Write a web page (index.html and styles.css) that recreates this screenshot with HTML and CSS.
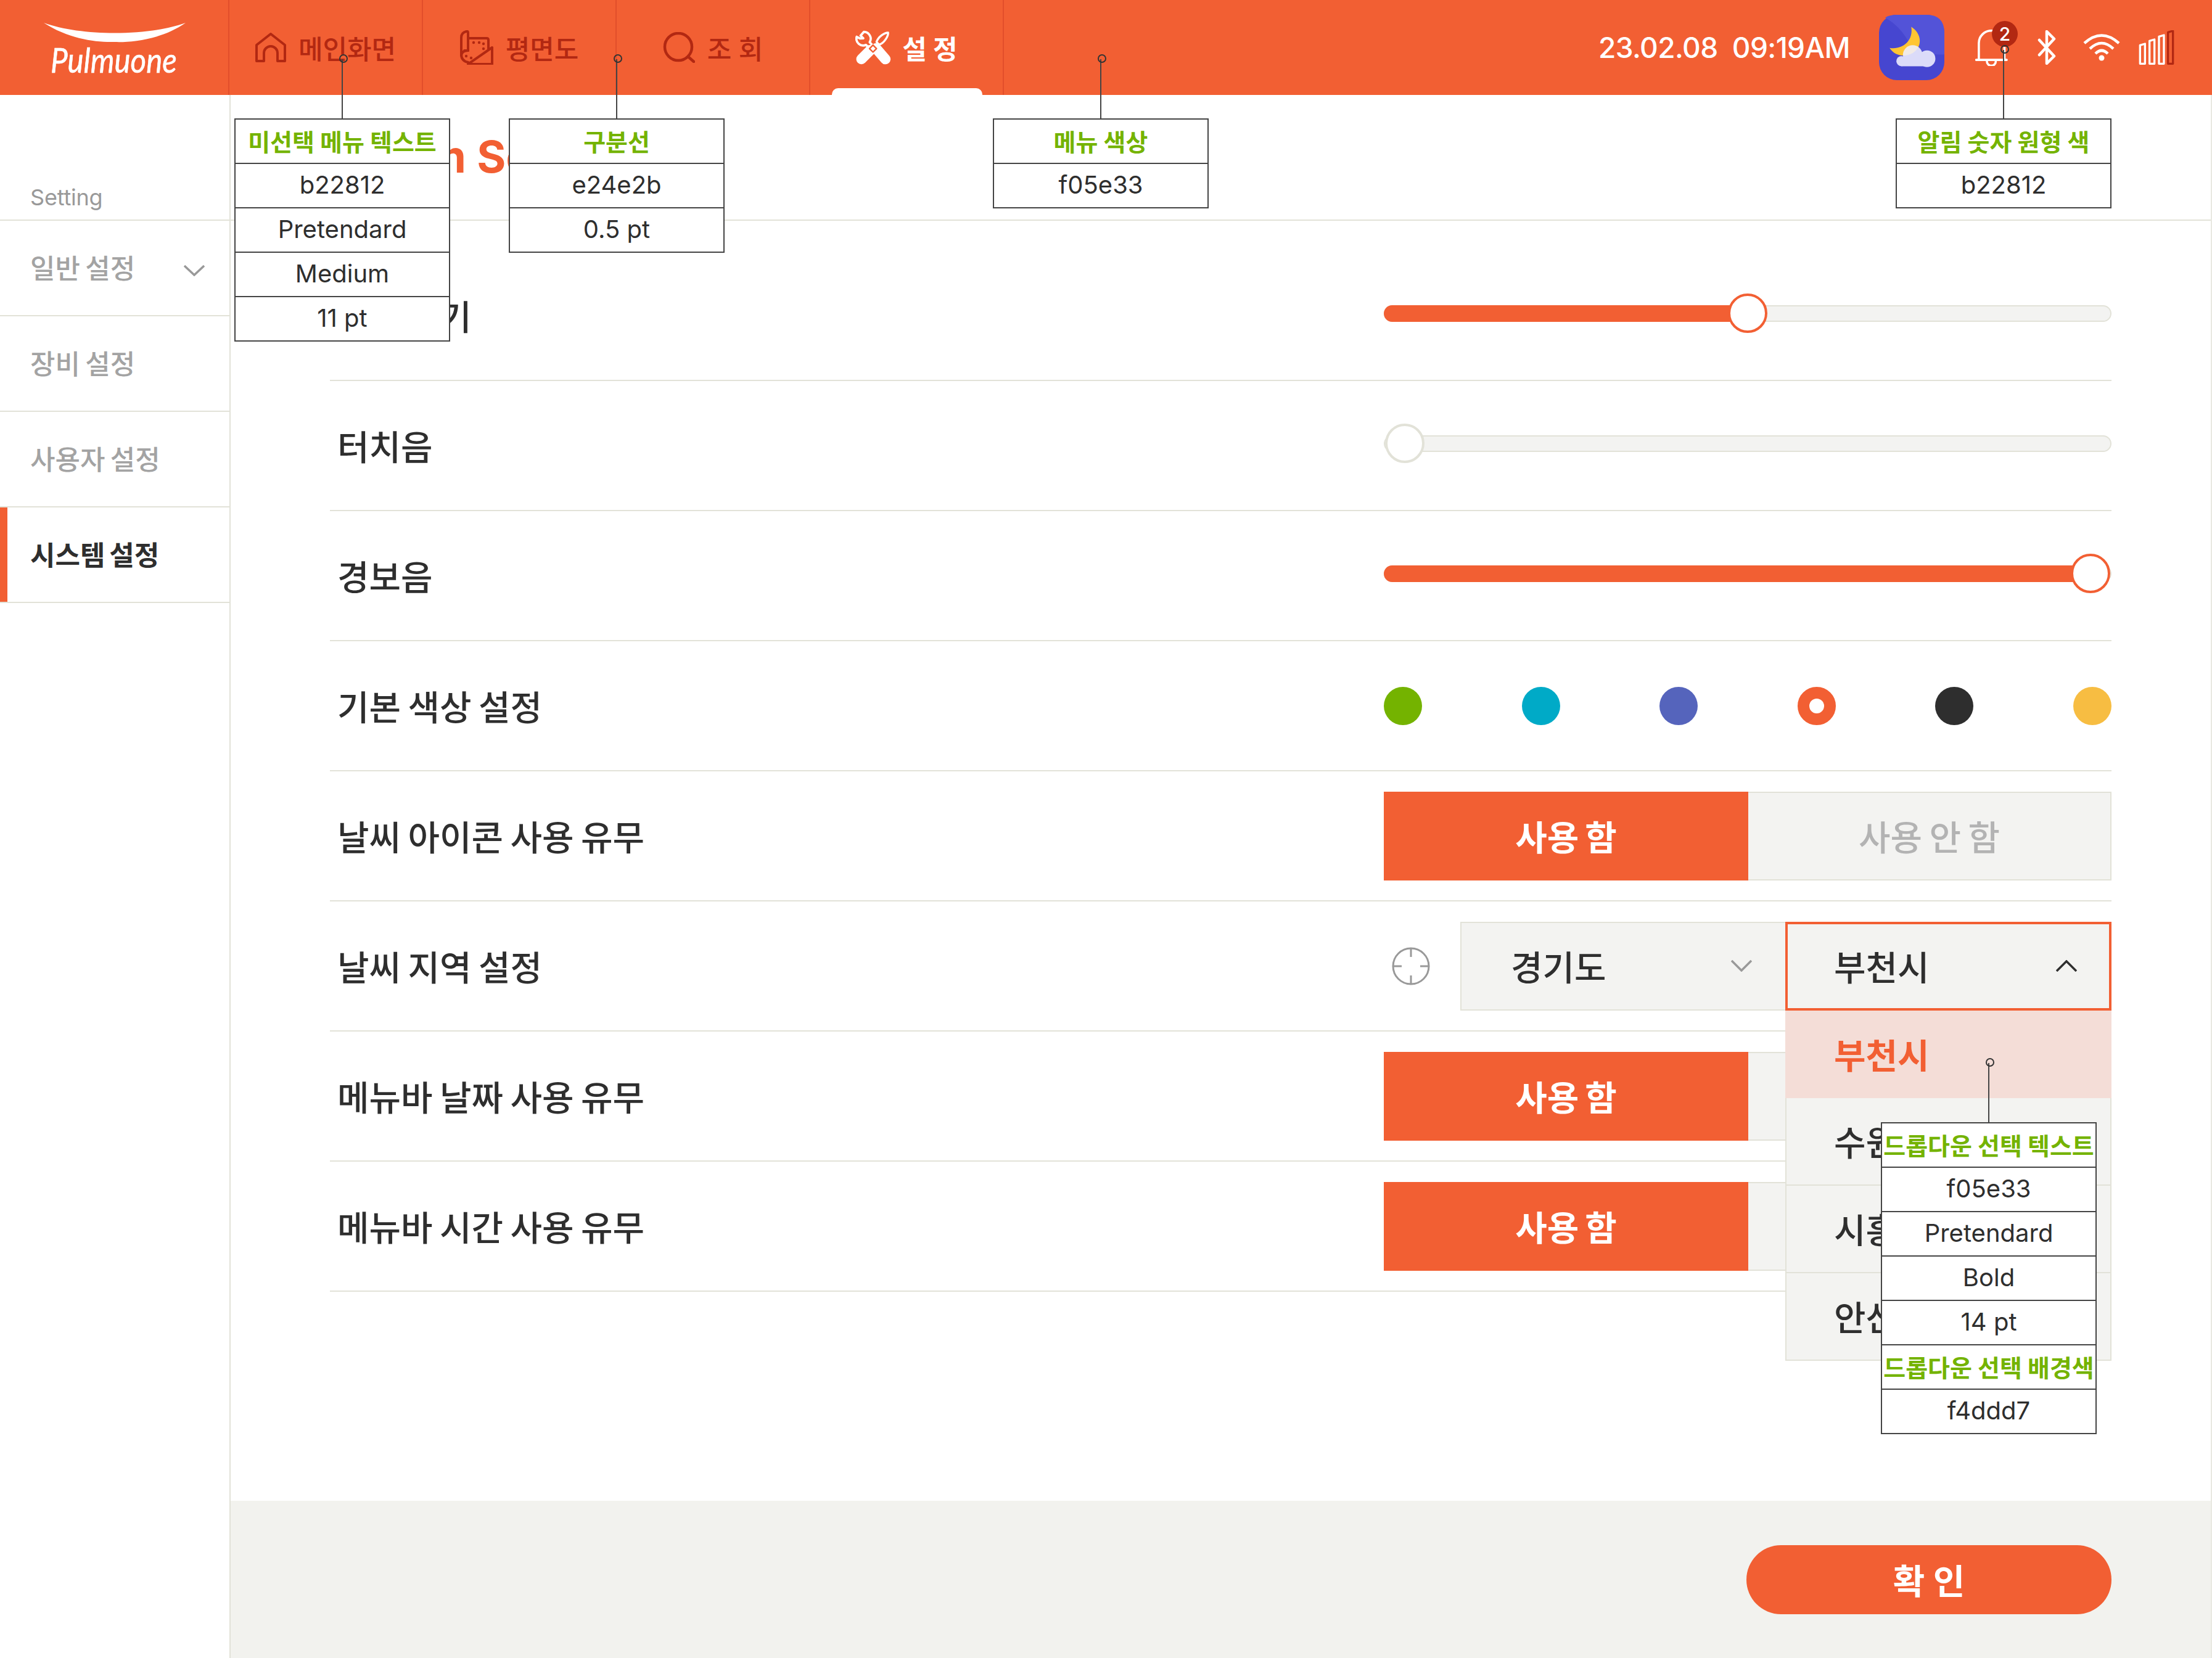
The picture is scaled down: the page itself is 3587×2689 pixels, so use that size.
FILE: index.html
```html
<!DOCTYPE html>
<html lang="ko">
<head>
<meta charset="utf-8">
<title>Pulmuone Setting</title>
<link rel="stylesheet" href="styles.css">
</head>
<body>
<div class="app">
  <header class="topbar">
    <div class="logo">
      <svg class="logo-smile" viewBox="0 0 230 32"><path d="M0 0C60 22 170 22 230 0C190 28 140 32 115 31C85 32 40 26 0 0Z" fill="#fff"/></svg>
      <span class="logo-text">Pulmuone</span>
    </div>
    <nav class="nav">
      <a class="nav-item">
        <svg class="ico-home" viewBox="0 0 50 48" fill="none" stroke="#b22812" stroke-width="4" stroke-linejoin="round"><path d="M2 20L25 2L48 20V46H36V33A11 11 0 0 0 14 33V46H2Z"/></svg>
        <span>메인화면</span>
      </a>
      <a class="nav-item">
        <svg class="ico-plan" viewBox="0 0 54 56" fill="none" stroke="#b22812" stroke-width="4" stroke-linejoin="round" stroke-linecap="round"><path d="M13 13H43Q46 13 46 16V30M13 33V4Q13 1 10 2Q2 4 2 12V39Q2 50 13 52"/><path d="M13 33Q3 33 2 41"/><path d="M52 28V55H13ZM13 33L7 33"/><g fill="#b22812" stroke="none"><circle cx="22" cy="20" r="2.2"/><circle cx="31" cy="20" r="2.2"/><circle cx="38" cy="22" r="2.2"/><circle cx="38" cy="30" r="2.2"/><circle cx="10" cy="42" r="2.2"/><circle cx="18" cy="45" r="2.2"/></g></svg>
        <span>평면도</span>
      </a>
      <a class="nav-item">
        <svg class="ico-search" viewBox="0 0 52 50" fill="none" stroke="#b22812" stroke-width="4.5" stroke-linecap="round"><circle cx="25" cy="24" r="22"/><path d="M41 40L50 48"/></svg>
        <span>조 회</span>
      </a>
      <a class="nav-item nav-active">
        <svg class="ico-tools" viewBox="55 88 172 170" fill="none" stroke="#fff" stroke-linecap="round" stroke-linejoin="round">
          <path d="M84 228L128 184M200 228L155 176" stroke-width="50"/>
          <path d="M96 96A33 33 0 0 1 124 146L148 172M95 97L80 114L93 127M61 120A33 33 0 0 0 106 159L128 180M61 120L77 128L93 127" stroke-width="11"/>
          <path d="M213 100C215 115 195 150 170 158L157 145C165 120 195 100 213 100Z" stroke-width="10"/>
          <path d="M140 160L157 177L140 194L123 177Z" fill="#fff" stroke="#f25f33" stroke-width="7"/>
        </svg>
        <span>설 정</span>
        <i class="nav-marker"></i>
      </a>
    </nav>
    <div class="status">
      <span class="clock">23.02.08&nbsp; 09:19AM</span>
      <svg class="weather" viewBox="80 38 320 320">
        <rect x="80" y="38" width="320" height="320" rx="88" fill="#4646d0"/>
        <path d="M110 52Q130 38 168 38H312Q400 38 400 126V232Q290 240 225 170Q180 90 110 52Z" fill="#5353d8"/>
        <path d="M238 97C290 130 295 195 245 225C205 248 155 238 132 200C190 210 250 170 238 97Z" fill="#ffc533"/>
        <g opacity=".88" fill="#f0f0ff"><circle cx="245" cy="235" r="48"/><circle cx="315" cy="253" r="41"/><circle cx="190" cy="265" r="25"/><rect x="190" y="250" width="125" height="40"/></g>
      </svg>
      <div class="bell">
        <svg class="bell-svg" viewBox="100 115 165 180" fill="none" stroke="#fff" stroke-width="11" stroke-linecap="round"><path d="M118 262V182A62 62 0 0 1 180 120H190M245 180V262M105 265H256M158 272A22 22 0 0 0 202 272"/></svg>
        <span class="bell-badge">2</span>
      </div>
      <svg class="ico-bt" viewBox="0 0 30 56" fill="none" stroke="#fff" stroke-width="4.5" stroke-linejoin="round" stroke-linecap="round"><path d="M3 16L27 42L15 54V2L27 14L3 40"/></svg>
      <svg class="ico-wifi" viewBox="0 0 60 44" fill="none" stroke="#fff" stroke-width="4.5" stroke-linecap="butt"><path d="M2 15Q30 -10 58 15M11 24Q30 6 49 24M20 32Q30 22 40 32"/><circle cx="30" cy="39" r="4.5" fill="#fff" stroke="none"/></svg>
      <svg class="ico-signal" viewBox="475 117 172 168" fill="none" stroke="#fff" stroke-width="10" stroke-linejoin="round"><path d="M481 190L505 183V280H481ZM527 169L551 162V280H527ZM573 148L597 141V280H573Z"/><path d="M617 127L641 120V280H617Z" stroke="#b22812"/></svg>
    </div>
  </header>

  <div class="body">
    <aside class="sidebar">
      <div class="side-head">Setting</div>
      <div class="side-item">일반 설정
        <svg class="chev" viewBox="0 0 34 18" fill="none" stroke="#999" stroke-width="3.5"><path d="M1 1L17 16L33 1"/></svg>
      </div>
      <div class="side-item">장비 설정</div>
      <div class="side-item">사용자 설정</div>
      <div class="side-item side-active">시스템 설정</div>
    </aside>

    <main class="main">
      <h1 class="title">System Setting</h1>
      <section class="rows">
        <div class="row">
          <div class="label">화면 밝기</div>
          <div class="slider"><div class="fill" style="width:590px"><i class="thumb"></i></div></div>
        </div>
        <div class="row">
          <div class="label">터치음</div>
          <div class="slider"><div class="fill fill-off" style="width:34px"><i class="thumb thumb-off"></i></div></div>
        </div>
        <div class="row">
          <div class="label">경보음</div>
          <div class="slider"><div class="fill" style="width:1146px"><i class="thumb"></i></div></div>
        </div>
        <div class="row">
          <div class="label">기본 색상 설정</div>
          <div class="swatches">
            <i class="swatch sw-green"></i><i class="swatch sw-teal"></i><i class="swatch sw-blue"></i><i class="swatch sw-orange"></i><i class="swatch sw-dark"></i><i class="swatch sw-yellow"></i>
          </div>
        </div>
        <div class="row">
          <div class="label">날씨 아이콘 사용 유무</div>
          <div class="toggle"><div class="tg tg-on">사용 함</div><div class="tg tg-off">사용 안 함</div></div>
        </div>
        <div class="row">
          <div class="label">날씨 지역 설정</div>
          <div class="region">
            <svg class="crosshair" viewBox="0 0 62 62" fill="none" stroke="#999" stroke-width="3"><circle cx="31" cy="31" r="29"/><path d="M31 2V16M31 46V60M2 31H16M46 31H60"/></svg>
            <div class="select">경기도
              <svg class="sel-chev" viewBox="0 0 34 19" fill="none" stroke="#999" stroke-width="3.5"><path d="M1 1L17 17L33 1"/></svg>
            </div>
            <div class="select select-open">부천시
              <svg class="sel-chev" viewBox="0 0 34 19" fill="none" stroke="#2e2e2e" stroke-width="3.5"><path d="M1 18L17 2L33 18"/></svg>
              <div class="dropdown">
                <div class="opt opt-sel">부천시</div>
                <div class="opt">수원시</div>
                <div class="opt">시흥시</div>
                <div class="opt">안산시</div>
              </div>
            </div>
          </div>
        </div>
        <div class="row">
          <div class="label">메뉴바 날짜 사용 유무</div>
          <div class="toggle"><div class="tg tg-on">사용 함</div><div class="tg tg-off">사용 안 함</div></div>
        </div>
        <div class="row">
          <div class="label">메뉴바 시간 사용 유무</div>
          <div class="toggle"><div class="tg tg-on">사용 함</div><div class="tg tg-off">사용 안 함</div></div>
        </div>
      </section>
      <footer class="footer"><button class="confirm">확 인</button></footer>
    </main>
  </div>

  <div class="note note-1"><i class="leader"></i><div class="n-h">미선택 메뉴 텍스트</div><div class="n-v">b22812</div><div class="n-v">Pretendard</div><div class="n-v">Medium</div><div class="n-v">11 pt</div></div>
  <div class="note note-2"><i class="leader"></i><div class="n-h">구분선</div><div class="n-v">e24e2b</div><div class="n-v">0.5 pt</div></div>
  <div class="note note-3"><i class="leader"></i><div class="n-h">메뉴 색상</div><div class="n-v">f05e33</div></div>
  <div class="note note-4"><i class="leader leader-long"></i><div class="n-h">알림 숫자 원형 색</div><div class="n-v">b22812</div></div>
  <div class="note note-5"><i class="leader"></i><div class="n-h">드롭다운 선택 텍스트</div><div class="n-v">f05e33</div><div class="n-v">Pretendard</div><div class="n-v">Bold</div><div class="n-v">14 pt</div><div class="n-h">드롭다운 선택 배경색</div><div class="n-v">f4ddd7</div></div>
</div>
</body>
</html>
```

FILE: styles.css
```css
* { box-sizing: border-box; }
html, body { margin: 0; padding: 0; background: #fff; }
body { font-family: Inter, "Noto Sans CJK KR", sans-serif; color: #2e2e2e; }
.app { position: relative; width: 3587px; height: 2689px; display: flex; flex-direction: column; overflow: hidden; }

/* top bar */
.topbar { height: 154px; flex: none; background: #f25f33; display: flex; align-items: stretch; }
.logo { position: relative; width: 372px; flex: none; display: flex; flex-direction: column; align-items: center; padding-top: 37px; }
.logo-smile { width: 230px; height: 32px; flex: none; margin-left: -1px; }
.logo-text { font-family: Lato, sans-serif; font-style: italic; font-weight: 400; font-size: 56px; line-height: 54px; color: #fff; margin-top: 1px; margin-left: -3px; transform: scaleX(.88); -webkit-text-stroke: .6px #fff; }
.nav { display: flex; border-left: 2px solid #e24e2b; margin-left: -2px; }
.nav-item { position: relative; width: 314px; flex: none; display: flex; align-items: center; justify-content: center; gap: 20px; border-right: 2px solid #e24e2b; color: #b22812; font-size: 43px; font-weight: 500; white-space: nowrap; }
.nav-active { color: #fff; font-weight: 700; }
.nav-active span { margin-left: -2px; }
.nav-marker { position: absolute; left: 35px; bottom: 0; width: 244px; height: 11px; background: #fff; border-radius: 10px 10px 0 0; }
.ico-home { width: 50px; height: 48px; flex: none; }
.ico-plan { width: 54px; height: 56px; flex: none; }
.ico-search { width: 52px; height: 50px; flex: none; }
.ico-tools { width: 58px; height: 57px; flex: none; }
.status { flex: 1; display: flex; align-items: center; padding-left: 964px; }
.clock { width: 455px; flex: none; color: #fff; font-size: 46px; font-weight: 500; white-space: nowrap; letter-spacing: -.6px; }
.weather { width: 106px; height: 106px; flex: none; margin-top: 0; }
.bell { position: relative; width: 54px; height: 59px; flex: none; margin-left: 50px; margin-top: 1px; }
.bell-svg { width: 54px; height: 59px; display: block; }
.bell-badge { position: absolute; left: 27px; top: -14px; width: 42px; height: 42px; border-radius: 50%; background: #b22812; color: #fff; font-size: 30px; font-weight: 500; display: flex; align-items: center; justify-content: center; }
.ico-bt { width: 30px; height: 56px; flex: none; margin-left: 47px; }
.ico-wifi { width: 60px; height: 44px; flex: none; margin-left: 44px; }
.ico-signal { width: 58px; height: 56px; flex: none; margin-left: 30px; }

/* body */
.body { flex: 1; display: flex; min-height: 0; }
.sidebar { width: 374px; flex: none; border-right: 2px solid #e2e2d8; }
.side-head { height: 204px; border-bottom: 2px solid #e2e2d8; display: flex; align-items: flex-end; padding: 0 0 14px 49px; font-size: 36px; letter-spacing: -.2px; color: #999; }
.side-item { position: relative; height: 155px; border-bottom: 2px solid #e2e2d8; display: flex; align-items: center; padding: 0 0 3px 49px; font-size: 44px; font-weight: 500; word-spacing: -3.5px; color: #a3a3a3; white-space: nowrap; }
.side-active { color: #2e2e2e; font-weight: 700; box-shadow: inset 12px 0 0 #f25f33; }
.chev { position: absolute; left: 298px; top: 72px; width: 34px; height: 18px; }

.main { flex: 1; display: flex; flex-direction: column; min-width: 0; border-right: 2px solid #e9e9e2; }
.title { margin: 0; height: 204px; flex: none; border-bottom: 2px solid #e2e2d8; display: flex; align-items: center; padding: 0 0 4px 117px; font-size: 72px; font-weight: 700; color: #f25f33; white-space: nowrap; }
.rows { flex: none; margin: 49px 161px 339px; }
.row { height: 211px; border-bottom: 2px solid #e2e2d8; display: flex; align-items: center; justify-content: space-between; }
.label { padding: 0 0 3px 12px; font-size: 56px; font-weight: 500; word-spacing: -3.5px; white-space: nowrap; }

.slider { width: 1180px; height: 27px; margin-bottom: 6px; background: #f3f3f1; border: 2px solid #e2e2d8; border-radius: 14px; position: relative; }
.fill { position: relative; height: 27px; margin: -2px; background: #f25f33; border-radius: 14px 0 0 14px; }
.fill-off { background: transparent; }
.thumb { position: absolute; right: -32px; top: -19px; width: 64px; height: 64px; border-radius: 50%; background: #fff; border: 4px solid #f25f33; }
.thumb-off { border-color: #e2e2d8; }

.swatches { width: 1180px; display: flex; justify-content: space-between; }
.swatch { width: 62px; height: 62px; border-radius: 50%; display: block; }
.sw-green { background: #74b300; }
.sw-teal { background: #00aac7; }
.sw-blue { background: #5564bc; }
.sw-orange { background: #fff; border: 19px solid #f25f33; }
.sw-dark { background: #2e2e2e; }
.sw-yellow { background: #f7bd42; }

.toggle { width: 1180px; height: 144px; display: flex; }
.tg { display: flex; align-items: center; justify-content: center; padding-bottom: 3px; font-size: 56px; font-weight: 700; word-spacing: -3.5px; white-space: nowrap; }
.tg-on { width: 591px; flex: none; background: #f25f33; color: #fff; }
.tg-off { flex: 1; background: #f3f3f1; color: #b3b3b3; font-weight: 500; border: 2px solid #e2e2d8; border-left: 0; }

.region { width: 1180px; height: 144px; display: flex; align-items: center; }
.crosshair { width: 62px; height: 62px; flex: none; margin: 0 49px 0 13px; }
.select { position: relative; height: 144px; flex: 1; background: #f3f3f1; border: 2px solid #e2e2d8; border-right: 0; display: flex; align-items: center; justify-content: space-between; padding: 0 54px 3px 80px; font-size: 56px; font-weight: 500; white-space: nowrap; }
.select-open { flex: none; width: 529px; border: 4px solid #f25f33; padding: 0 52px 3px 75px; }
.sel-chev { width: 34px; height: 19px; flex: none; margin-top: 3px; }
.dropdown { position: absolute; left: -4px; right: -4px; top: calc(100% + 4px); z-index: 2; }
.opt { height: 142px; background: #f3f3f1; border: 2px solid #e2e2d8; border-top: 0; display: flex; align-items: center; padding: 0 0 3px 77px; }
.opt-sel { background: #f4ddd7; color: #f25f33; font-weight: 700; border: 0; padding: 0 0 3px 79px; }

.footer { flex: 1; background: #f2f2ee; display: flex; align-items: center; justify-content: flex-end; padding-right: 161px; }
.confirm { width: 592px; height: 112px; border: 0; border-radius: 56px; background: #f25f33; color: #fff; font-family: inherit; font-size: 56px; font-weight: 700; padding-bottom: 3px; }

/* spec annotations lying over the design */
.note { position: absolute; width: 350px; background: #fff; border: 2px solid #444; z-index: 5; }
.note-1 { left: 380px; top: 192px; }
.note-2 { left: 825px; top: 192px; }
.note-3 { left: 1610px; top: 192px; }
.note-4 { left: 3074px; top: 192px; }
.note-5 { left: 3050px; top: 1820px; }
.n-h, .n-v { height: 72px; display: flex; align-items: center; justify-content: center; white-space: nowrap; padding-bottom: 3px; }
.leader + .n-h { height: 70px; }
.n-h + .n-h, .n-v + .n-h, .n-h + .n-v, .n-v + .n-v { border-top: 2px solid #444; }
.n-h { color: #74b300; font-size: 39px; font-weight: 700; }
.n-v { color: #2e2e2e; font-size: 40px; font-weight: 400; }
.leader { position: absolute; left: 172px; bottom: 100%; height: 98px; width: 2px; background: #444; }
.leader-long { height: 113px; }
.leader::before { content: ""; position: absolute; left: -4px; top: -8px; width: 10px; height: 10px; border: 2px solid #333; border-radius: 50%; }
```
